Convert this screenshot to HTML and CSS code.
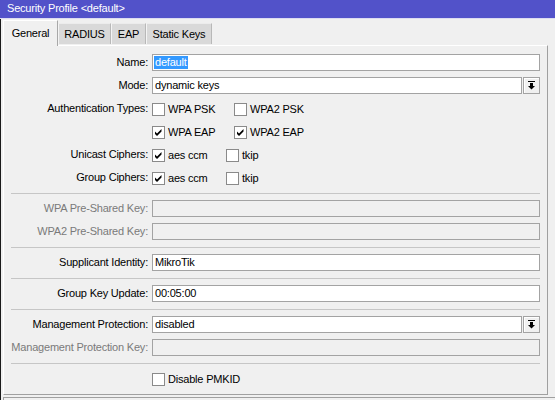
FILE: index.html
```html
<!DOCTYPE html>
<html>
<head>
<meta charset="utf-8">
<link rel="stylesheet" href="styles.css">
</head>
<body>
<div class="window">
  <div class="titlebar">Security Profile &lt;default&gt;</div>
  <div class="body">
    <div class="tabs">
      <div class="tab tab-active tab-general">General</div>
      <div class="tab tab-radius">RADIUS</div>
      <div class="tab tab-eap">EAP</div>
      <div class="tab tab-keys">Static Keys</div>
    </div>
    <div class="panel">
      <div class="form">
        <div class="label">Name:</div>
        <div class="field"><div class="input"><span class="sel">default</span></div></div>

        <div class="label">Mode:</div>
        <div class="field combo"><div class="input">dynamic keys</div><div class="drop"><svg width="7" height="9" viewBox="0 0 7 9"><rect x="0" y="0" width="7" height="1" fill="#000"/><rect x="2" y="2" width="3" height="3" fill="#000"/><polygon points="0,5 7,5 3.5,8.5" fill="#000"/></svg></div></div>

        <div class="label">Authentication Types:</div>
        <div class="field checks">
          <label class="opt opt-wide"><span class="box"></span>WPA PSK</label>
          <label class="opt"><span class="box"></span>WPA2 PSK</label>
        </div>

        <div class="label"></div>
        <div class="field checks">
          <label class="opt opt-wide"><span class="box"><svg width="11" height="11" viewBox="0 0 11 11"><polygon points="2,4.5 4,6.5 8.5,2 8.5,4.5 4,9 2,7" fill="#000"/></svg></span>WPA EAP</label>
          <label class="opt"><span class="box"><svg width="11" height="11" viewBox="0 0 11 11"><polygon points="2,4.5 4,6.5 8.5,2 8.5,4.5 4,9 2,7" fill="#000"/></svg></span>WPA2 EAP</label>
        </div>

        <div class="label">Unicast Ciphers:</div>
        <div class="field checks">
          <label class="opt opt-mid"><span class="box"><svg width="11" height="11" viewBox="0 0 11 11"><polygon points="2,4.5 4,6.5 8.5,2 8.5,4.5 4,9 2,7" fill="#000"/></svg></span>aes ccm</label>
          <label class="opt"><span class="box"></span>tkip</label>
        </div>

        <div class="label">Group Ciphers:</div>
        <div class="field checks">
          <label class="opt opt-mid"><span class="box"><svg width="11" height="11" viewBox="0 0 11 11"><polygon points="2,4.5 4,6.5 8.5,2 8.5,4.5 4,9 2,7" fill="#000"/></svg></span>aes ccm</label>
          <label class="opt"><span class="box"></span>tkip</label>
        </div>

        <div class="sep"></div>

        <div class="label disabled">WPA Pre-Shared Key:</div>
        <div class="field"><div class="input input-disabled"></div></div>

        <div class="label disabled">WPA2 Pre-Shared Key:</div>
        <div class="field"><div class="input input-disabled"></div></div>

        <div class="sep"></div>

        <div class="label">Supplicant Identity:</div>
        <div class="field"><div class="input">MikroTik</div></div>

        <div class="sep"></div>

        <div class="label">Group Key Update:</div>
        <div class="field"><div class="input">00:05:00</div></div>

        <div class="sep"></div>

        <div class="label">Management Protection:</div>
        <div class="field combo"><div class="input">disabled</div><div class="drop"><svg width="7" height="9" viewBox="0 0 7 9"><rect x="0" y="0" width="7" height="1" fill="#000"/><rect x="2" y="2" width="3" height="3" fill="#000"/><polygon points="0,5 7,5 3.5,8.5" fill="#000"/></svg></div></div>

        <div class="label disabled">Management Protection Key:</div>
        <div class="field"><div class="input input-disabled"></div></div>

        <div class="sep"></div>

        <div class="label"></div>
        <div class="field checks">
          <label class="opt"><span class="box"></span>Disable PMKID</label>
        </div>
      </div>
    </div>
    <div class="statusbar"></div>
  </div>
</div>
</body>
</html>
```

FILE: styles.css
```css
html, body {
  margin: 0;
  padding: 0;
  background: #f0f0f0;
  overflow: hidden;
}
body {
  font-family: "Liberation Sans", Arial, sans-serif;
  font-size: 11px;
  letter-spacing: -0.2px;
  color: #000;
}
.window {
  width: 555px;
  height: 400px;
  display: flex;
  flex-direction: column;
}
.titlebar {
  height: 18px;
  line-height: 17px;
  background: #5252c9;
  color: #fff;
  padding-left: 7px;
  border-bottom: 1px solid #dcdcf0;
  flex: none;
}
.body {
  flex: 1;
  border-left: 1px solid #1a1a1a;
  padding-left: 2px;
  display: flex;
  flex-direction: column;
  min-height: 0;
}
.tabs {
  display: flex;
  align-items: flex-end;
  height: 26px;
  flex: none;
}
.tab {
  height: 21px;
  line-height: 21px;
  text-align: center;
  background: #d9d9d9;
  border-top: 1px solid #ececec;
  border-left: 1px solid #f4f4f4;
  border-right: 1px solid #b8b8b8;
  box-sizing: border-box;
  margin-bottom: 1px;
}
.tab-active {
  height: 26px;
  line-height: 24px;
  background: #f0f0f0;
  border-top: 1px solid #fff;
  border-left: 1px solid #fff;
  border-right: 1px solid #a8a8a8;
  margin-bottom: -1px;
  position: relative;
  z-index: 1;
}
.tab-general { width: 55px; }
.tab-radius { width: 53px; }
.tab-eap { width: 35px; }
.tab-keys { width: 66px; }
.panel {
  width: 545px;
  height: 350px;
  box-sizing: border-box;
  border-top: 1px solid #fff;
  border-left: 1px solid #fff;
  border-right: 1px solid #a0a0a0;
  border-bottom: 1px solid #a0a0a0;
  padding: 8px 7px 0 0;
  flex: none;
}
.form {
  display: grid;
  grid-template-columns: 144px 1fr;
  column-gap: 4px;
  row-gap: 6px;
}
.label {
  text-align: right;
  height: 17px;
  line-height: 17px;
  white-space: nowrap;
}
.label.disabled {
  color: #7a7a7a;
}
.field {
  display: flex;
  align-items: center;
  height: 17px;
  min-width: 0;
}
.input {
  flex: 1;
  height: 17px;
  box-sizing: border-box;
  border: 1px solid #a3a3a3;
  background: #fff;
  line-height: 15px;
  padding-left: 2px;
  white-space: nowrap;
  overflow: hidden;
}
.input-disabled {
  background: #f0f0f0;
}
.sel {
  display: inline-block;
  background: #3399ff;
  color: #fff;
  padding: 0 1px;
  margin-left: -1px;
  height: 13px;
  line-height: 13px;
  margin-top: 1px;
  vertical-align: top;
}
.combo .drop {
  width: 17px;
  height: 17px;
  box-sizing: border-box;
  margin-left: 1px;
  border: 1px solid #a3a3a3;
  background: #f0f0f0;
  box-shadow: inset 1px 1px #fff;
  display: flex;
  align-items: center;
  justify-content: center;
  flex: none;
}
.combo .drop svg {
  display: block;
}
.opt {
  display: flex;
  align-items: center;
  white-space: nowrap;
}
.opt-wide { width: 82px; }
.opt-mid { width: 74px; }
.box {
  width: 13px;
  height: 13px;
  box-sizing: border-box;
  border: 1px solid #8a8a8a;
  background: #fff;
  margin-right: 3px;
  margin-top: 1px;
  display: flex;
  align-items: center;
  justify-content: center;
  flex: none;
}
.box svg { display: block; }
.sep {
  grid-column: 1 / -1;
  height: 2px;
  box-sizing: border-box;
  border-bottom: 1px solid #c6c6c6;
  margin-left: 7px;
}
.statusbar {
  margin-top: 2px;
  flex: 1;
  border-top: 1px solid #a0a0a0;
  border-left: 1px solid #a0a0a0;
}
```
